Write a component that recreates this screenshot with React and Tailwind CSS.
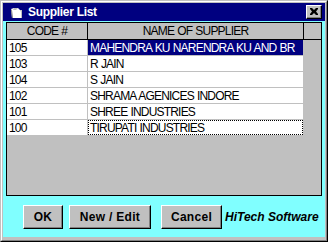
import React from "react";

const rows = [
  { code: "105", name: "MAHENDRA KU NARENDRA KU AND BR", selected: true },
  { code: "103", name: "R JAIN" },
  { code: "104", name: "S JAIN" },
  { code: "102", name: "SHRAMA AGENICES INDORE" },
  { code: "101", name: "SHREE INDUSTRIES" },
  { code: "100", name: "TIRUPATI INDUSTRIES", focus: true },
];

function Btn({ children, w }) {
  return (
    <div
      className={`${w} h-[24px] bg-[#c0c0c0] border border-t-white border-l-white border-r-black border-b-black shadow-[inset_-1px_-1px_0_#808080] flex items-center justify-center font-bold text-[12px] tracking-[0.3px] text-black`}
    >
      {children}
    </div>
  );
}

export default function App() {
  return (
    <div
      className="w-[328px] h-[242px] bg-[#c0c0c0] border border-t-[#c0c0c0] border-l-[#c0c0c0] border-r-black border-b-black"
      style={{ fontFamily: '"Liberation Sans", Arial, sans-serif' }}
    >
      <div className="w-full h-full border border-t-white border-l-white border-r-[#808080] border-b-[#808080] pt-px px-px pb-[3px] flex flex-col">
        {/* Title bar */}
        <div className="h-[18px] bg-[#000080] flex items-center shrink-0">
          <svg width="14" height="12" viewBox="0 0 14 12" className="ml-[7px] mt-px">
            <path d="M1 2 L4 1 L8 1 L10 3 L12 3 L12 11 L2 11 Z" fill="#ffffff" />
            <path d="M1 2 L2 11 L3 11 L2 3 Z" fill="#808080" />
            <path d="M4 1 L8 1 L6 3 L3 3 Z" fill="#c0c0c0" />
            <path d="M10 3 L12 3 L12 11 L11 11 L11 5 Z" fill="#c0c0c0" />
          </svg>
          <span className="ml-[4px] text-white font-bold text-[12px] tracking-[-0.3px] leading-none">
            Supplier List
          </span>
          <div className="ml-auto mr-[3px] w-[16px] h-[14px] bg-[#c0c0c0] border border-t-white border-l-white border-r-black border-b-black shadow-[inset_-1px_-1px_0_#808080] flex items-center justify-center">
            <svg width="8" height="7" viewBox="0 0 8 7" className="-mt-px -ml-px">
              <path d="M0 0h2l2 2 2-2h2v1L6 3.5 8 6v1H6L4 5 2 7H0V6l2-2.5L0 1z" fill="#000" />
            </svg>
          </div>
        </div>
        {/* Client */}
        <div className="flex-1 bg-[#80ffff] flex flex-col pl-[3px] pr-[3px] pt-px">
          <div className="h-[174px] border border-black bg-[#c0c0c0] flex flex-col text-[12px] tracking-[-0.8px] [word-spacing:0.5px] text-black">
            <div className="h-[17px] flex border-b border-black shrink-0">
              <div className="w-[81px] border-r border-black flex items-center justify-center leading-none">
                CODE #
              </div>
              <div className="w-[216px] border-r border-black flex items-center justify-center leading-none">
                NAME OF SUPPLIER
              </div>
            </div>
            {rows.map((r) => (
              <div key={r.code} className="h-[16px] flex shrink-0">
                <div className="w-[81px] h-full bg-white border-r border-b border-[#c0c0c0] flex items-center pl-[2px] leading-none">
                  {r.code}
                </div>
                <div
                  className={`w-[216px] h-full border-r border-b border-[#c0c0c0] ${
                    r.selected ? "bg-[#000080] text-white" : "bg-white"
                  }`}
                >
                  <div
                    className={`h-full flex items-center pl-[1px] leading-none border ${
                      r.focus ? "border-dotted border-black" : "border-transparent"
                    }`}
                  >
                    {r.name}
                  </div>
                </div>
              </div>
            ))}
          </div>
          <div className="flex items-center mt-[9px] pl-[17px]">
            <Btn w="w-[40px]">OK</Btn>
            <div className="ml-[6px]">
              <Btn w="w-[82px]">New / Edit</Btn>
            </div>
            <div className="ml-[10px]">
              <Btn w="w-[61px]">Cancel</Btn>
            </div>
            <span className="ml-[3px] font-bold italic text-[12px] text-black">HiTech Software</span>
          </div>
        </div>
      </div>
    </div>
  );
}
